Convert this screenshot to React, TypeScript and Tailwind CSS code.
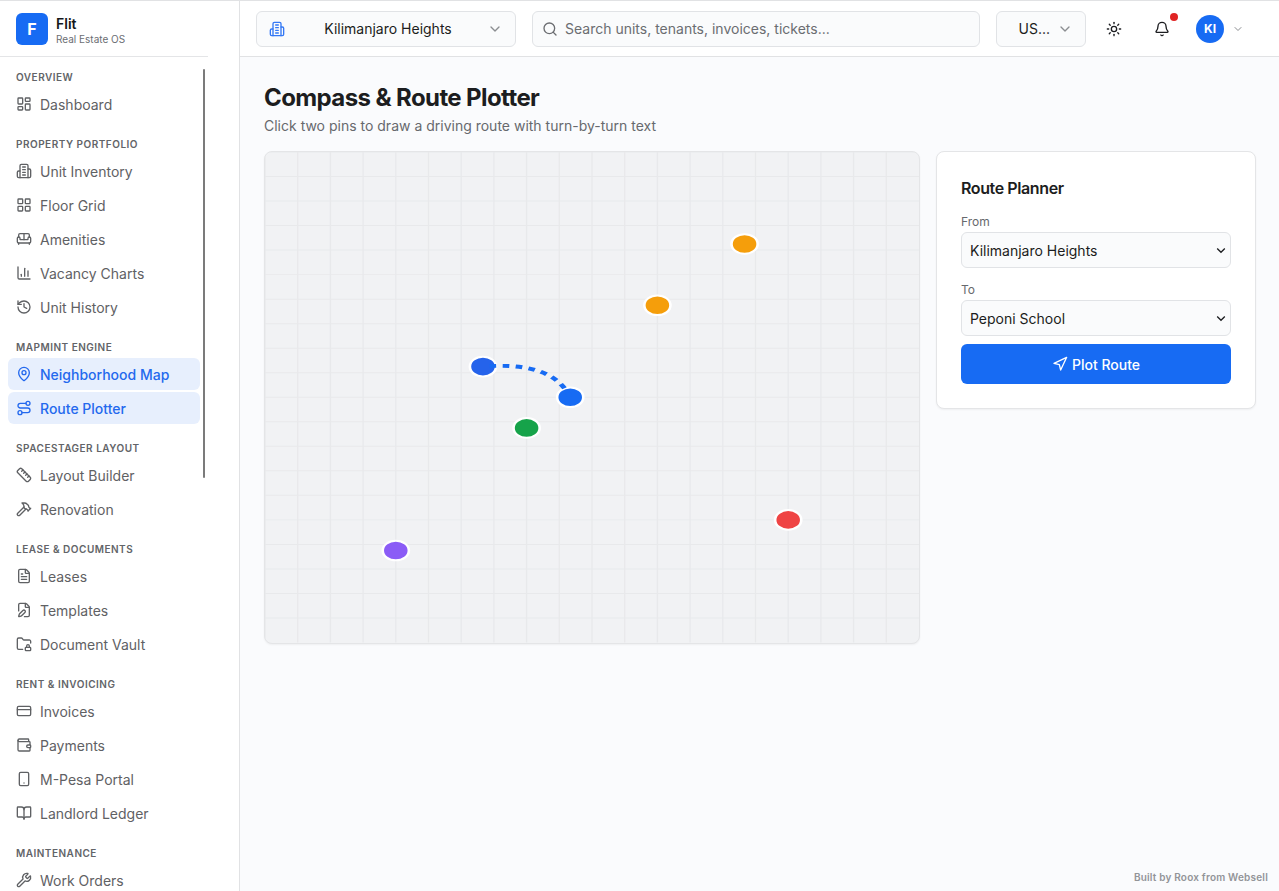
import type { ComponentType, ReactNode } from "react";
import {
  Bell,
  BookOpen,
  ChartColumn,
  ChevronDown,
  CreditCard,
  FilePen,
  FileText,
  FolderLock,
  Hammer,
  History,
  LayoutDashboard,
  LayoutGrid,
  MapPin,
  Navigation,
  Route,
  Ruler,
  Search,
  Smartphone,
  Sofa,
  Sun,
  Wallet,
  Wrench,
} from "lucide-react";

type IconType = ComponentType<{ className?: string; strokeWidth?: number }>;

function Building({ className, strokeWidth = 2 }: { className?: string; strokeWidth?: number }) {
  return (
    <svg
      viewBox="0 0 24 24"
      fill="none"
      stroke="currentColor"
      strokeWidth={strokeWidth}
      strokeLinecap="round"
      strokeLinejoin="round"
      className={className}
    >
      <path d="M6 22V4a2 2 0 0 1 2-2h8a2 2 0 0 1 2 2v18Z" />
      <path d="M6 12H4a2 2 0 0 0-2 2v6a2 2 0 0 0 2 2h2" />
      <path d="M18 9h2a2 2 0 0 1 2 2v9a2 2 0 0 1-2 2h-2" />
      <path d="M10 6h4M10 10h4M10 14h4M10 18h4" />
    </svg>
  );
}

const NAV: { title: string; items: { label: string; icon: IconType; active?: boolean }[] }[] = [
  { title: "Overview", items: [{ label: "Dashboard", icon: LayoutDashboard }] },
  {
    title: "Property Portfolio",
    items: [
      { label: "Unit Inventory", icon: Building },
      { label: "Floor Grid", icon: LayoutGrid },
      { label: "Amenities", icon: Sofa },
      { label: "Vacancy Charts", icon: ChartColumn },
      { label: "Unit History", icon: History },
    ],
  },
  {
    title: "MapMint Engine",
    items: [
      { label: "Neighborhood Map", icon: MapPin, active: true },
      { label: "Route Plotter", icon: Route, active: true },
    ],
  },
  {
    title: "SpaceStager Layout",
    items: [
      { label: "Layout Builder", icon: Ruler },
      { label: "Renovation", icon: Hammer },
    ],
  },
  {
    title: "Lease & Documents",
    items: [
      { label: "Leases", icon: FileText },
      { label: "Templates", icon: FilePen },
      { label: "Document Vault", icon: FolderLock },
    ],
  },
  {
    title: "Rent & Invoicing",
    items: [
      { label: "Invoices", icon: CreditCard },
      { label: "Payments", icon: Wallet },
      { label: "M-Pesa Portal", icon: Smartphone },
      { label: "Landlord Ledger", icon: BookOpen },
    ],
  },
  { title: "Maintenance", items: [{ label: "Work Orders", icon: Wrench }] },
];

const PINS = [
  { x: 33.33, y: 43.75, color: "#2563eb" },
  { x: 46.67, y: 50, color: "#176bf3" },
  { x: 40, y: 56.25, color: "#16a34a" },
  { x: 60, y: 31.25, color: "#f59e0b" },
  { x: 73.33, y: 18.75, color: "#f59e0b" },
  { x: 80, y: 75, color: "#ef4444" },
  { x: 20, y: 81.25, color: "#8b5cf6" },
];

const GRID = Array.from({ length: 20 }, (_, i) => i * 5);

function Sidebar() {
  return (
    <aside className="flex w-60 shrink-0 flex-col overflow-hidden border-r border-[#e1e2e4] bg-white">
      <div className="flex h-14 w-52 shrink-0 items-center gap-2 border-b border-[#e4e5e7] px-4">
        <div className="grid h-8 w-8 place-items-center rounded-md bg-[#176bf3] text-base font-bold text-white">
          F
        </div>
        <div className="pt-1">
          <div className="text-sm font-semibold leading-[17px] text-[#15171a]">Flit</div>
          <div className="text-[10px] leading-[14px] text-[#6b6e73]">Real Estate OS</div>
        </div>
      </div>
      <div className="flex min-h-0 w-[205px] flex-1 items-start justify-between pt-3">
        <nav className="-mt-px flex w-[200px] flex-col gap-[15px] pl-2">
          {NAV.map((section) => (
            <div key={section.title}>
              <p className="mb-[3px] px-2 pt-px text-[10px] font-semibold uppercase leading-4 tracking-[0.05em] text-[#626468]">
                {section.title}
              </p>
              <div className="flex flex-col gap-0.5">
                {section.items.map(({ label, icon: Icon, active }) => (
                  <a
                    key={label}
                    className={`flex h-8 items-center gap-2 rounded-md px-2 text-sm ${
                      active ? "bg-[#e7effd] font-medium text-[#2469ee]" : "text-[#5f6164]"
                    }`}
                  >
                    <Icon className="h-4 w-4 shrink-0" strokeWidth={2} />
                    <span className="pt-0.5">{label}</span>
                  </a>
                ))}
              </div>
            </div>
          ))}
        </nav>
        <div className="h-[409px] w-0.5 rounded-full bg-[#7b7b7b]" />
      </div>
    </aside>
  );
}

function Topbar() {
  return (
    <header className="flex h-14 shrink-0 items-center gap-4 border-b border-[#e1e2e4] bg-white px-4">
      <button className="flex h-9 w-[260px] items-center justify-between rounded-md border border-[#e1e3e6] bg-[#fafbfc] px-3 text-sm text-[#1c1d20]">
        <Building className="h-4 w-4 text-[#3478f5]" />
        <span className="pl-1">Kilimanjaro Heights</span>
        <ChevronDown className="h-4 w-4 text-[#8b8d91]" strokeWidth={2} />
      </button>
      <div className="flex h-9 w-[448px] items-center gap-[7px] rounded-md border border-[#e1e3e6] bg-[#fafbfc] px-[9px] text-sm text-[#6b6d71]">
        <Search className="h-4 w-4" strokeWidth={2} />
        <span>Search units, tenants, invoices, tickets...</span>
      </div>
      <button className="flex h-9 w-[90px] items-center justify-end gap-[7px] rounded-md border border-[#e1e3e6] bg-[#fafbfc] px-3 text-sm text-[#1c1d20]">
        <span>US...</span>
        <ChevronDown className="h-4 w-4 text-[#8b8d91]" strokeWidth={2} />
      </button>
      <div className="flex items-center">
        <button className="-ml-1.5 grid h-9 w-9 place-items-center text-[#1c1d20]">
          <Sun className="h-4 w-4" />
        </button>
        <button className="relative ml-3 grid h-9 w-9 place-items-center text-[#1c1d20]">
          <Bell className="h-4 w-4" />
          <span className="absolute right-0.5 top-0.5 h-2 w-2 rounded-full bg-[#e02424]" />
        </button>
        <div className="ml-4 grid h-7 w-7 place-items-center rounded-full bg-[#176bf3] text-xs font-bold text-white">
          KI
        </div>
        <ChevronDown className="ml-2 h-3 w-3 text-[#8b8d91]" />
      </div>
    </header>
  );
}

function RouteMap() {
  return (
    <div className="h-[492.5px] w-[656px] shrink-0 overflow-hidden rounded-lg border border-[#e4e5e7] bg-[#f1f2f4] shadow-xs">
      <svg viewBox="0 0 100 100" preserveAspectRatio="none" className="h-full w-full">
        <g stroke="#e8e9eb" strokeWidth="0.2">
          {GRID.map((n) => (
            <g key={n}>
              <line x1={n} y1="0" x2={n} y2="100" />
              <line x1="0" y1={n} x2="100" y2={n} />
            </g>
          ))}
        </g>
        {PINS.map((p) => (
          <circle key={`${p.x}-${p.y}`} cx={p.x} cy={p.y} r="2" fill={p.color} stroke="#fff" strokeWidth="0.4" />
        ))}
        <path
          d="M33.33 43.75Q44 42.6 46.67 50"
          fill="none"
          stroke="#176bf3"
          strokeWidth="0.8"
          strokeDasharray="1 1"
          strokeDashoffset="1"
        />
      </svg>
    </div>
  );
}

function Field({ label, children }: { label: string; children: ReactNode }) {
  return (
    <label className="block">
      <span className="block text-xs leading-5 text-[#67696d]">{label}</span>
      <span className="relative block">
        <select className="block h-9 w-full appearance-none rounded-md border border-[#e1e3e6] bg-[#fafbfc] px-2 pt-0.5 text-sm text-[#1c1d20]">
          {children}
        </select>
        <svg
          viewBox="0 0 10 10"
          fill="none"
          stroke="#1c1d20"
          strokeWidth="1.3"
          className="pointer-events-none absolute right-[5px] top-[13px] h-2.5 w-2.5"
        >
          <path d="M1.2 3.5 5 7.3l3.8-3.8" />
        </svg>
      </span>
    </label>
  );
}

function RoutePlanner() {
  return (
    <section className="w-80 shrink-0 rounded-lg border border-[#e4e5e7] bg-white p-6 shadow-xs">
      <h2 className="mb-3 text-base font-semibold leading-6 tracking-tight text-[#1c1d20]">Route Planner</h2>
      <div className="flex flex-col gap-3">
        <Field label="From">
          <option>Kilimanjaro Heights</option>
        </Field>
        <Field label="To">
          <option>Peponi School</option>
        </Field>
      </div>
      <button className="mt-2 flex h-10 w-full items-center justify-center gap-1 rounded-md bg-[#176bf3] text-sm font-medium text-white">
        <Navigation className="h-4 w-4" strokeWidth={2} />
        <span className="pt-0.5">Plot Route</span>
      </button>
    </section>
  );
}

export default function App() {
  return (
    <div className="flex h-screen overflow-hidden border-t border-[#e1e2e4] bg-[#fafbfd] font-['Inter',sans-serif]">
      <Sidebar />
      <div className="flex min-w-0 flex-1 flex-col">
        <Topbar />
        <main className="flex-1 px-6 pt-[25px]">
          <h1 className="text-2xl font-bold leading-8 tracking-tight text-[#1c1d20]">
            Compass &amp; Route Plotter
          </h1>
          <p className="mt-0.5 text-sm text-[#67696d]">
            Click two pins to draw a driving route with turn-by-turn text
          </p>
          <div className="mt-[15px] flex items-start gap-4">
            <RouteMap />
            <RoutePlanner />
          </div>
        </main>
        <footer className="pb-1.5 pr-[11px] text-right text-[10px] font-semibold leading-[15px] tracking-[0.02em] text-[#929498]">
          Built by Roox from Websell
        </footer>
      </div>
    </div>
  );
}
